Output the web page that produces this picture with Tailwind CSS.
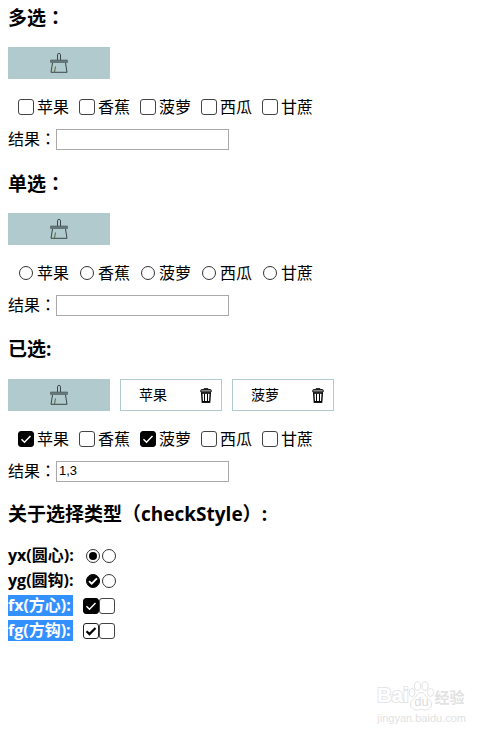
<!DOCTYPE html>
<html lang="zh-CN">
<head>
  <meta charset="UTF-8">
  <meta name="viewport" content="width=device-width, initial-scale=1.0">
  <title>checkStyle</title>
  <script src="https://cdn.jsdelivr.net/npm/@tailwindcss/browser@4"></script>
</head>
<body class="relative min-h-screen bg-white px-2 pt-[7px] font-['Open_Sans','Noto_Sans_CJK_SC',sans-serif] text-base text-black">

  <!-- Shared icons -->
  <svg class="hidden">
    <symbol id="brush" viewBox="0 0 18 20">
      <path d="M7.500 7V1.500Q7.500 .5 9 .5T10.500 1.500V7" fill="none" stroke="#3b4547"/>
      <path d="M.5 7h17v2.500H.5z" fill="#66787b" stroke="#4b595c" stroke-width=".6"/>
      <path d="M2.500 10L1 19.300h16L15.500 10" fill="none" stroke="#3b4547"/>
      <path d="M5.500 13.500L4.500 19" fill="none" stroke="#5d6436"/>
    </symbol>
    <symbol id="trash" viewBox="0 0 12 15">
      <path d="M4 1.500V.7h4v.8" fill="none" stroke="#000"/>
      <path d="M.8 4V2.200Q.8 1.500 1.800 1.500h8.400q1 0 1 .7V4z" fill="#8a8a8a" stroke="#111" stroke-width=".9"/>
      <path d="M1.700 5l.6 9h7.400l.6-9z" fill="#fff" stroke="#000" stroke-width="1.400"/>
      <path d="M4.500 5.500v8M7.500 5.500v8" stroke="#000"/>
      <path d="M2 13.800h8" stroke="#000" stroke-width="1.600"/>
    </symbol>
    <symbol id="tick" viewBox="0 0 16 16">
      <path d="M3.500 8.200l3 3L12.500 5" fill="none" stroke="currentColor" stroke-width="1.500"/>
    </symbol>
    <symbol id="tick-bold" viewBox="0 0 16 16">
      <path d="M3.500 8.200l3 2.900L12.500 5" fill="none" stroke="currentColor" stroke-width="2.200"/>
    </symbol>
  </svg>

  <!-- Multiple choice -->
  <section class="mb-[22px]">
    <h3 class="mb-5 h-5 text-[19px] leading-5 font-bold">多选<span lang="zh-TW" class="font-['Noto_Sans_CJK_TC']">：</span></h3>
    <div class="flex flex-wrap gap-[10px]">
      <button type="button" aria-label="清空" class="flex h-8 w-[102px] items-center justify-center bg-[#b0cace]"><svg class="h-5 w-[18px]"><use href="#brush"/></svg></button>
    </div>
    <div class="mt-4 flex flex-wrap gap-x-[10px] pl-[10px] leading-6">
      <label class="flex items-center gap-[3px]"><input type="checkbox" class="size-4 appearance-none rounded-[3px] border border-[#444]">苹果</label>
      <label class="flex items-center gap-[3px]"><input type="checkbox" class="size-4 appearance-none rounded-[3px] border border-[#444]">香蕉</label>
      <label class="flex items-center gap-[3px]"><input type="checkbox" class="size-4 appearance-none rounded-[3px] border border-[#444]">菠萝</label>
      <label class="flex items-center gap-[3px]"><input type="checkbox" class="size-4 appearance-none rounded-[3px] border border-[#444]">西瓜</label>
      <label class="flex items-center gap-[3px]"><input type="checkbox" class="size-4 appearance-none rounded-[3px] border border-[#444]">甘蔗</label>
    </div>
    <div class="mt-2 flex h-6 items-center leading-[22px]">
      <label for="result1" class="h-6">结果<span lang="zh-TW" class="font-['Noto_Sans_CJK_TC']">：</span></label>
      <input type="text" id="result1" class="h-[21px] w-[173px] border border-[#a9a9a9] px-0.5 font-['Liberation_Sans'] text-[13px]">
    </div>
  </section>

  <!-- Single choice -->
  <section class="mb-[22px]">
    <h3 class="mb-5 h-5 text-[19px] leading-5 font-bold">单选<span lang="zh-TW" class="font-['Noto_Sans_CJK_TC']">：</span></h3>
    <div class="flex flex-wrap gap-[10px]">
      <button type="button" aria-label="清空" class="flex h-8 w-[102px] items-center justify-center bg-[#b0cace]"><svg class="h-5 w-[18px]"><use href="#brush"/></svg></button>
    </div>
    <div class="mt-4 flex flex-wrap gap-x-[10px] pl-[10px] leading-6">
      <label class="flex items-center gap-1"><input type="radio" name="fruit" class="ml-px size-[14px] appearance-none rounded-full border border-[#333]">苹果</label>
      <label class="flex items-center gap-1"><input type="radio" name="fruit" class="ml-px size-[14px] appearance-none rounded-full border border-[#333]">香蕉</label>
      <label class="flex items-center gap-1"><input type="radio" name="fruit" class="ml-px size-[14px] appearance-none rounded-full border border-[#333]">菠萝</label>
      <label class="flex items-center gap-1"><input type="radio" name="fruit" class="ml-px size-[14px] appearance-none rounded-full border border-[#333]">西瓜</label>
      <label class="flex items-center gap-1"><input type="radio" name="fruit" class="ml-px size-[14px] appearance-none rounded-full border border-[#333]">甘蔗</label>
    </div>
    <div class="mt-2 flex h-6 items-center leading-[22px]">
      <label for="result2" class="h-6">结果<span lang="zh-TW" class="font-['Noto_Sans_CJK_TC']">：</span></label>
      <input type="text" id="result2" class="h-[21px] w-[173px] border border-[#a9a9a9] px-0.5 font-['Liberation_Sans'] text-[13px]">
    </div>
  </section>

  <!-- Preselected -->
  <section class="mb-5">
    <h3 class="mb-5 h-5 text-[19px] leading-5 font-bold">已选:</h3>
    <div class="flex flex-wrap gap-[10px]">
      <button type="button" aria-label="清空" class="flex h-8 w-[102px] items-center justify-center bg-[#b0cace]"><svg class="h-5 w-[18px]"><use href="#brush"/></svg></button>
      <div class="flex h-8 w-[102px] items-center justify-between border border-[#b0cace] pr-[9px] pl-[18px] text-sm">苹果<button type="button" aria-label="删除苹果"><svg class="h-[15px] w-3"><use href="#trash"/></svg></button></div>
      <div class="flex h-8 w-[102px] items-center justify-between border border-[#b0cace] pr-[9px] pl-[18px] text-sm">菠萝<button type="button" aria-label="删除菠萝"><svg class="h-[15px] w-3"><use href="#trash"/></svg></button></div>
    </div>
    <div class="mt-4 flex flex-wrap gap-x-[10px] pl-[10px] leading-6">
      <label class="flex items-center gap-[3px]"><span class="grid"><input type="checkbox" checked class="peer col-start-1 row-start-1 size-4 appearance-none rounded-[3px] border border-[#444] checked:border-black checked:bg-black"><svg class="pointer-events-none col-start-1 row-start-1 hidden size-4 text-white peer-checked:block"><use href="#tick"/></svg></span>苹果</label>
      <label class="flex items-center gap-[3px]"><input type="checkbox" class="size-4 appearance-none rounded-[3px] border border-[#444]">香蕉</label>
      <label class="flex items-center gap-[3px]"><span class="grid"><input type="checkbox" checked class="peer col-start-1 row-start-1 size-4 appearance-none rounded-[3px] border border-[#444] checked:border-black checked:bg-black"><svg class="pointer-events-none col-start-1 row-start-1 hidden size-4 text-white peer-checked:block"><use href="#tick"/></svg></span>菠萝</label>
      <label class="flex items-center gap-[3px]"><input type="checkbox" class="size-4 appearance-none rounded-[3px] border border-[#444]">西瓜</label>
      <label class="flex items-center gap-[3px]"><input type="checkbox" class="size-4 appearance-none rounded-[3px] border border-[#444]">甘蔗</label>
    </div>
    <div class="mt-2 flex h-6 items-center leading-[22px]">
      <label for="result3" class="h-6">结果<span lang="zh-TW" class="font-['Noto_Sans_CJK_TC']">：</span></label>
      <input type="text" id="result3" value="1,3" class="h-[21px] w-[173px] border border-[#a9a9a9] px-0.5 font-['Liberation_Sans'] text-[13px]">
    </div>
  </section>

  <!-- Check styles -->
  <section>
    <h3 class="mb-5 h-5 text-[19px] leading-5 font-bold">关于选择类型<span lang="zh-TW" class="font-['Noto_Sans_CJK_TC']">（</span>checkStyle<span lang="zh-TW" class="font-['Noto_Sans_CJK_TC']">）</span>:</h3>
    <ul class="font-bold">
      <li class="flex h-[25px] items-center gap-[10px]">
        <span class="pr-0.5 leading-[21px]">yx(圆心):</span>
        <span class="flex items-center gap-0.5">
          <input type="radio" name="yx" aria-label="yx 1" checked class="size-[14px] appearance-none rounded-full border border-[#333] checked:bg-black checked:bg-clip-content checked:p-0.5">
          <input type="radio" name="yx" aria-label="yx 2" class="size-[14px] appearance-none rounded-full border border-[#333]">
        </span>
      </li>
      <li class="flex h-[25px] items-center gap-[10px]">
        <span class="pr-0.5 leading-[21px]">yg(圆钩):</span>
        <span class="flex items-center gap-0.5">
          <span class="grid place-items-center"><input type="radio" name="yg" aria-label="yg 1" checked class="peer col-start-1 row-start-1 size-[14px] appearance-none rounded-full border border-[#333] checked:border-black checked:bg-black"><svg class="pointer-events-none col-start-1 row-start-1 hidden size-[14px] text-white peer-checked:block"><use href="#tick-bold"/></svg></span>
          <input type="radio" name="yg" aria-label="yg 2" class="size-[14px] appearance-none rounded-full border border-[#333]">
        </span>
      </li>
      <li class="flex h-[25px] items-center gap-[10px]">
        <span class="bg-[#3390ff] pr-0.5 leading-[21px] text-white">fx(方心):</span>
        <span class="flex items-center">
          <span class="grid"><input type="checkbox" aria-label="fx 1" checked class="peer col-start-1 row-start-1 size-4 appearance-none rounded-[3px] border border-[#444] checked:border-black checked:bg-black"><svg class="pointer-events-none col-start-1 row-start-1 hidden size-4 text-white peer-checked:block"><use href="#tick"/></svg></span>
          <input type="checkbox" aria-label="fx 2" class="size-4 appearance-none rounded-[3px] border border-[#444]">
        </span>
      </li>
      <li class="flex h-[25px] items-center gap-[10px]">
        <span class="bg-[#3390ff] pr-0.5 leading-[21px] text-white">fg(方钩):</span>
        <span class="flex items-center">
          <span class="grid"><input type="checkbox" aria-label="fg 1" checked class="peer col-start-1 row-start-1 size-4 appearance-none rounded-[3px] border border-[#222]"><svg class="pointer-events-none col-start-1 row-start-1 hidden size-4 text-black peer-checked:block"><use href="#tick-bold"/></svg></span>
          <input type="checkbox" aria-label="fg 2" class="size-4 appearance-none rounded-[3px] border border-[#444]">
        </span>
      </li>
    </ul>
  </section>

  <!-- Watermark -->
  <div class="pointer-events-none absolute right-[29px] bottom-[10px] text-white">
    <div class="flex h-[31px] items-end">
      <span class="font-['Liberation_Sans'] text-[20px] leading-8 font-bold [-webkit-text-stroke:2px_#e6e6e6] [paint-order:stroke]">Bai</span>
      <span class="grid place-items-center">
        <svg viewBox="0 0 26 30" class="col-start-1 row-start-1 h-[30px] w-[26px]" fill="#fff" stroke="#e2e2e2">
          <ellipse cx="4" cy="11.500" rx="3" ry="4"/>
          <ellipse cx="9.500" cy="5" rx="3" ry="4.300"/>
          <ellipse cx="17" cy="5" rx="3" ry="4.300"/>
          <ellipse cx="22.500" cy="11.500" rx="3" ry="4"/>
          <path d="M13 11.500c-3.500 0-4 3-6 5s-5 4-4.500 7.500 3 5 6 5 3-.8 4.500-.8 2 .8 4.500.8 5.500-1.500 6-5-2.500-5.500-4.500-7.500-2.500-5-6-5z"/>
        </svg>
        <span class="col-start-1 row-start-1 pt-3 font-['Liberation_Sans'] text-[13px] leading-4 text-[#dcdcdc]">du</span>
      </span>
      <span class="font-['Noto_Sans_CJK_SC'] text-[15px] leading-7 font-bold text-[#e2e2e2]">经验</span>
    </div>
    <div class="font-['Liberation_Sans'] text-[11px] leading-[14px] text-[#e2e2e2]">jingyan.baidu.com</div>
  </div>

</body>
</html>
